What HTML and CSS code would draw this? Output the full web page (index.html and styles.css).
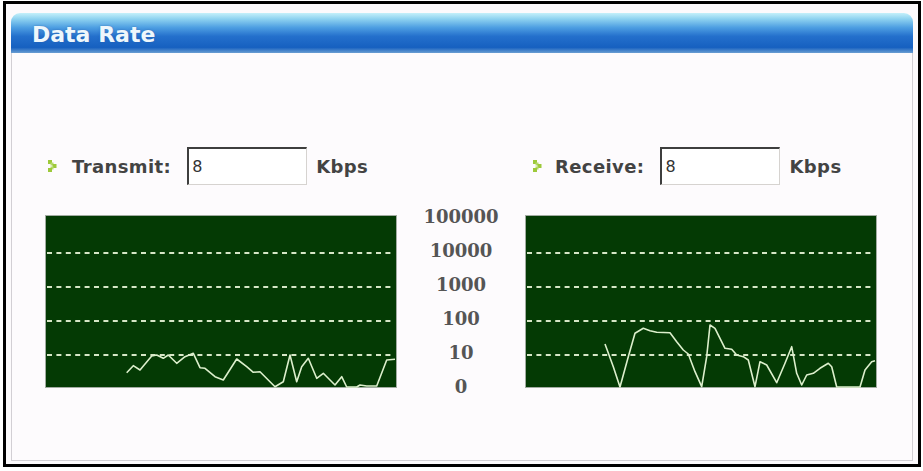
FILE: index.html
```html
<!DOCTYPE html>
<html>
<head>
<meta charset="utf-8">
<link rel="stylesheet" href="styles.css">
</head>
<body>
<div class="frame">
  <div class="panel">
    <div class="header">Data Rate</div>
    <div class="body">
      <div class="grid">
        <div class="field field-left">
          <svg class="bullet" width="9" height="12" viewBox="0 0 9 12"><rect x="0" y="0" width="4" height="4" fill="#9dc93a"/><rect x="2.5" y="2.5" width="3" height="3" fill="#b5d96a"/><rect x="4.5" y="4" width="4" height="4" fill="#9dc93a"/><rect x="2.5" y="6.5" width="3" height="3" fill="#b5d96a"/><rect x="0" y="8" width="4" height="4" fill="#9dc93a"/></svg>
          <span class="label">Transmit:</span>
          <input class="rate" type="text" value="8">
          <span class="unit">Kbps</span>
        </div>
        <div></div>
        <div class="field field-right">
          <svg class="bullet" width="9" height="12" viewBox="0 0 9 12"><rect x="0" y="0" width="4" height="4" fill="#9dc93a"/><rect x="2.5" y="2.5" width="3" height="3" fill="#b5d96a"/><rect x="4.5" y="4" width="4" height="4" fill="#9dc93a"/><rect x="2.5" y="6.5" width="3" height="3" fill="#b5d96a"/><rect x="0" y="8" width="4" height="4" fill="#9dc93a"/></svg>
          <span class="label">Receive:</span>
          <input class="rate" type="text" value="8">
          <span class="unit">Kbps</span>
        </div>

        <svg class="chart" width="352" height="173" viewBox="0 0 352 173">
          <rect x="0.5" y="0.5" width="351" height="172" fill="#043a04" stroke="#a2aca2"/>
          <g stroke="#d6e6c6" stroke-width="2" stroke-dasharray="5 4.4">
            <line x1="2" y1="38" x2="347" y2="38"/>
            <line x1="2" y1="72" x2="347" y2="72"/>
            <line x1="2" y1="106" x2="347" y2="106"/>
            <line x1="2" y1="140" x2="347" y2="140"/>
          </g>
          <polyline fill="none" stroke="#dcefcc" stroke-width="1.6" stroke-linejoin="round" points="81.7,157.7 88.3,150.7 95,155 106.7,141 111.7,140 118.3,143.3 123.3,140 131.7,148.3 140,141.7 148.3,138.3 155,152.7 160,153.3 170,161.7 178.3,165 191.7,144 201.7,151.7 208.3,157.3 215,156.7 230,171.7 238.3,166.7 245,140 251.7,166.7 256.7,151.7 263.3,143.3 271.7,163.3 278.3,158.3 285,165 290,170 296.7,161.7 301.7,172 311.7,172 315,170 321.7,171 331.7,171 341.7,145 350,144.3"/>
        </svg>
        <div class="axis">
          <div>100000</div>
          <div>10000</div>
          <div>1000</div>
          <div>100</div>
          <div>10</div>
          <div>0</div>
        </div>
        <svg class="chart" width="352" height="173" viewBox="0 0 352 173">
          <rect x="0.5" y="0.5" width="351" height="172" fill="#043a04" stroke="#a2aca2"/>
          <g stroke="#d6e6c6" stroke-width="2" stroke-dasharray="5 4.4">
            <line x1="2" y1="38" x2="347" y2="38"/>
            <line x1="2" y1="72" x2="347" y2="72"/>
            <line x1="2" y1="106" x2="347" y2="106"/>
            <line x1="2" y1="140" x2="347" y2="140"/>
          </g>
          <polyline fill="none" stroke="#dcefcc" stroke-width="1.6" stroke-linejoin="round" points="80,129 88.3,151.7 95,172 103.3,141.7 110,118.3 118.3,113.3 125,115.7 131.7,117.3 145,117.7 151.7,126.7 158.3,135 163.3,139 170,156.7 176.7,171.7 181.7,141.7 185,110 190,113.3 195,123.3 200,133.3 206.7,134.3 211.7,140 218.3,141.7 223.3,145 230,171.7 235,146.7 241.7,150 251.7,167.7 260,148.3 266.7,131.7 271.7,158.3 276.7,170 281.7,160 288.3,158.3 295,153.3 303.3,148.3 306.7,151.7 311.7,172 335,172 340,155 346.7,146.7 350,145.7"/>
        </svg>
      </div>
    </div>
  </div>
</div>
</body>
</html>
```

FILE: styles.css
```css
html, body {
  margin: 0;
  padding: 0;
  background: #ffffff;
}

.frame {
  margin: 1px 0 0 3px;
  width: 918px;
  height: 466px;
  box-sizing: border-box;
  border: 3px solid #000000;
  background: #fcfafc;
  padding: 9px 5px 3px 5px;
  display: flex;
}

.panel {
  flex: 1;
  display: flex;
  flex-direction: column;
}

.header {
  height: 40px;
  box-sizing: border-box;
  padding: 3px 0 0 21px;
  line-height: 37px;
  border-radius: 9px 9px 0 0;
  background: linear-gradient(#c4f0fa 0%, #8ed2f0 15%, #4e9fe2 36%, #2470cc 58%, #1660c0 86%, #6a9ed2 100%);
  color: #eef7fc;
  font-family: "DejaVu Sans", sans-serif;
  font-weight: bold;
  font-size: 22px;
  text-shadow: 0 0 2px rgba(40, 90, 160, 0.6);
}

.body {
  flex: 1;
  border: 1px solid #d2cfd4;
  border-top: none;
  padding: 94px 0 0 33px;
  background: #fdfbfd;
}

.grid {
  display: grid;
  grid-template-columns: 352px 128px 352px;
  row-gap: 30px;
  align-items: start;
}

.field {
  display: flex;
  align-items: center;
  height: 38px;
  font-family: "DejaVu Sans", sans-serif;
  font-weight: bold;
  font-size: 18px;
  letter-spacing: 0.4px;
  color: #434343;
}

.field-left {
  padding-left: 3px;
}

.field-right {
  padding-left: 8px;
}

.bullet {
  flex: none;
  margin-right: 15px;
}

.field-right .bullet {
  margin-right: 13px;
}

.rate {
  margin: 0 0 0 16px;
  width: 120px;
  height: 38px;
  box-sizing: border-box;
  border-style: solid;
  border-width: 2px 1px 1px 2px;
  border-color: #3e3e3e #d6d3d0 #d6d3d0 #3e3e3e;
  background: #ffffff;
  padding: 0 0 0 3px;
  font-family: "DejaVu Sans", sans-serif;
  font-size: 16px;
  letter-spacing: 0;
  color: #333333;
  outline: none;
}

.unit {
  margin-left: 9px;
}

.chart {
  display: block;
}

.axis {
  margin-top: -15px;
  text-align: center;
  font-family: "DejaVu Serif", serif;
  font-weight: bold;
  font-size: 18px;
  line-height: 34px;
  color: #555555;
}
```
